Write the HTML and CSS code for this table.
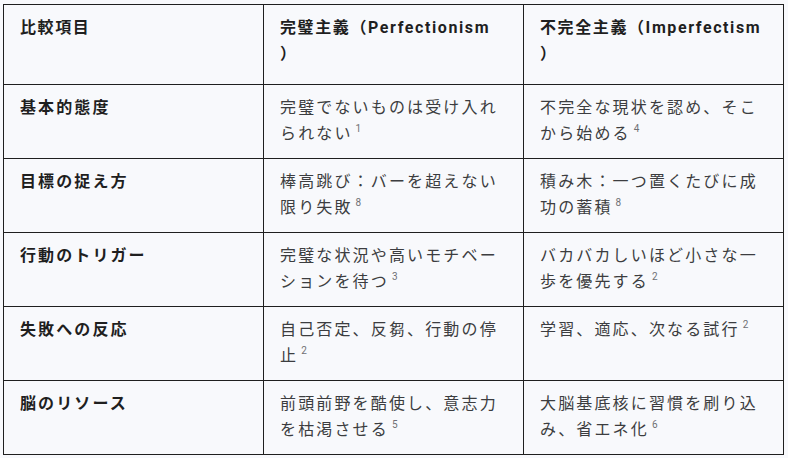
FILE: index.html
```html
<!DOCTYPE html>
<html lang="ja">
<head>
<meta charset="utf-8">
<link rel="stylesheet" href="styles.css">
</head>
<body>
<table class="cmp">
  <colgroup><col class="c"><col class="c"><col class="c"></colgroup>
  <thead>
    <tr class="head">
      <th>比較項目</th>
      <th>完璧主義（Perfectionism<br>）</th>
      <th>不完全主義（Imperfectism<br>）</th>
    </tr>
  </thead>
  <tbody>
    <tr>
      <td class="label">基本的態度</td>
      <td>完璧でないものは受け入れられない<sup>1</sup></td>
      <td>不完全な現状を認め、そこから始める<sup>4</sup></td>
    </tr>
    <tr>
      <td class="label">目標の捉え方</td>
      <td>棒高跳び：バーを超えない限り失敗<sup>8</sup></td>
      <td>積み木：一つ置くたびに成功の蓄積<sup>8</sup></td>
    </tr>
    <tr>
      <td class="label">行動のトリガー</td>
      <td>完璧な状況や高いモチベーションを待つ<sup>3</sup></td>
      <td>バカバカしいほど小さな一歩を優先する<sup>2</sup></td>
    </tr>
    <tr>
      <td class="label">失敗への反応</td>
      <td>自己否定、反芻、行動の停止<sup>2</sup></td>
      <td>学習、適応、次なる試行<sup>2</sup></td>
    </tr>
    <tr>
      <td class="label">脳のリソース</td>
      <td>前頭前野を酷使し、意志力を枯渇させる<sup>5</sup></td>
      <td>大脳基底核に習慣を刷り込み、省エネ化<sup>6</sup></td>
    </tr>
  </tbody>
</table>
</body>
</html>
```
FILE: styles.css
```css
html, body {
  margin: 0;
  padding: 0;
  background: #f8f9fc;
}
body {
  padding: 4px 0 0 3px;
  font-family: Roboto, "Noto Sans CJK JP", sans-serif;
  font-size: 16px;
  letter-spacing: 2.15px;
  color: #3c3d40;
}
.cmp {
  border-collapse: collapse;
  table-layout: fixed;
  width: 781px;
}
.c { width: 260px; }
.cmp th, .cmp td {
  border: 1px solid #1f1f1f;
  vertical-align: top;
  text-align: left;
  line-height: 26px;
  padding: 10px 14px 11px 16px;
  line-break: anywhere;
}
.head th {
  font-weight: 700;
  color: #1f1f1f;
  letter-spacing: 1.6px;
  padding: 10px 10px 17px 16px;
}
.cmp td.label {
  font-weight: 700;
  color: #1f1f1f;
  letter-spacing: 2.1px;
}
sup {
  font-size: 10px;
  line-height: 1;
  color: #6f7074;
  vertical-align: 0;
  position: relative;
  top: -7px;
  margin-left: 3px;
  letter-spacing: 0;
}
```
